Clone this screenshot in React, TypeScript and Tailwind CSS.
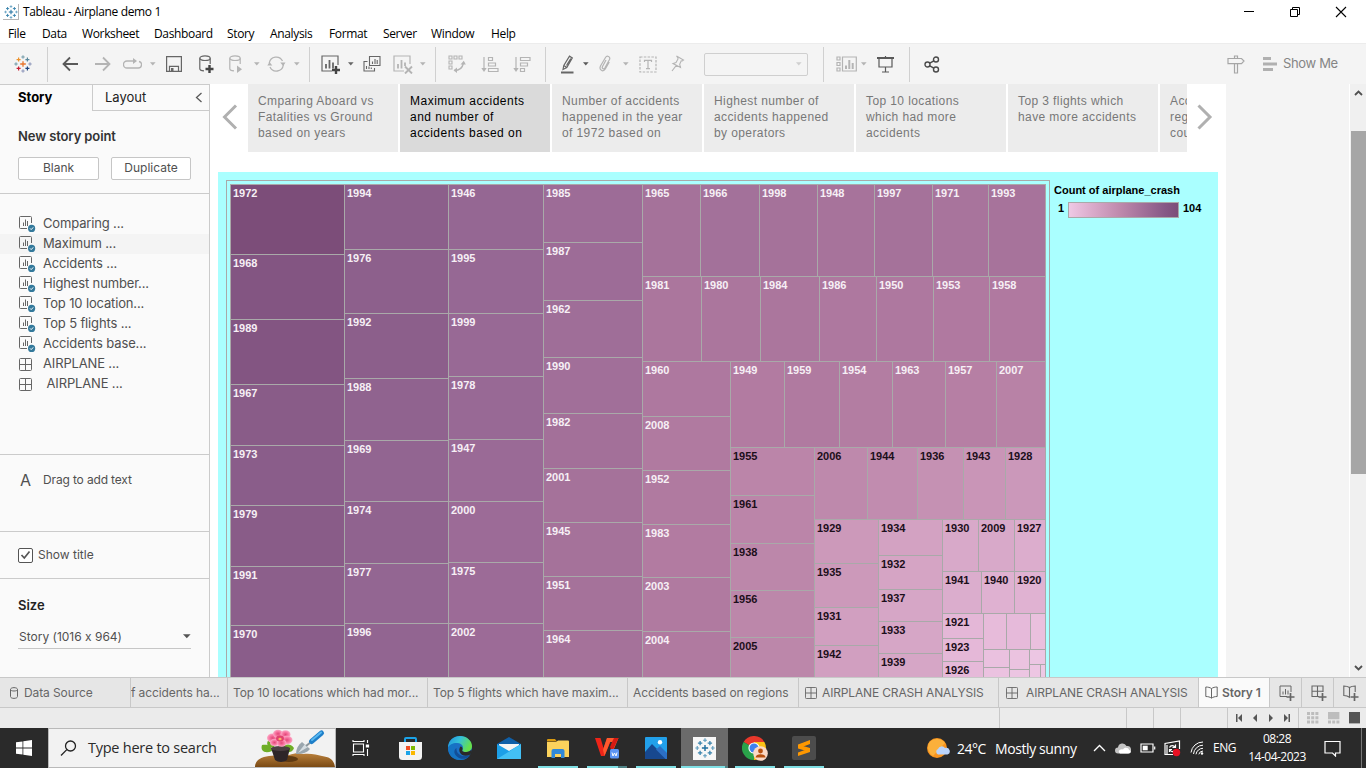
import React from "react";

/* ---------- treemap ---------- */

type Tree = { d: "x" | "y"; e: number[]; k: (string | Tree)[] };

const PALETTE = [
  "#eec9e5", "#eac1df", "#e6b9d9", "#e0b2d2", "#daabcb", "#d5a4c4", "#cf9dbe", "#ca96b8", "#c48fb2", "#be89ac",
  "#b882a6", "#b27ba1", "#aa759d", "#a27099", "#9a6a96", "#926591", "#8c5f8b", "#865986", "#81537f", "#7c4d79",
];

const channel = (hex: string, i: number) => parseInt(hex.slice(1 + i * 2, 3 + i * 2), 16);

function colorFor(value: number) {
  const t = Math.max(0, Math.min(19, ((value - 1) / 103) * 19));
  const lo = Math.floor(t);
  const hi = Math.min(19, lo + 1);
  const mix = [0, 1, 2].map((i) =>
    Math.round(channel(PALETTE[lo], i) * (1 - (t - lo)) + channel(PALETTE[hi], i) * (t - lo))
  );
  return `rgb(${mix.join(",")})`;
}

const x = (e: number[], k: (string | Tree)[]): Tree => ({ d: "x", e, k });
const y = (e: number[], k: (string | Tree)[]): Tree => ({ d: "y", e, k });

const TREE: Tree = x(
  [344, 448, 543, 642, 1045],
  [
    y([254, 319, 384, 445, 505, 566, 625, 685], ["1972", "1968", "1989", "1967", "1973", "1979", "1991", "1970"]),
    y([249, 313, 378, 440, 501, 563, 623, 684], ["1994", "1976", "1992", "1988", "1969", "1974", "1977", "1996"]),
    y([249, 313, 376, 439, 501, 562, 623, 684], ["1946", "1995", "1999", "1978", "1947", "2000", "1975", "2002"]),
    y([242, 300, 357, 413, 468, 522, 576, 630, 684], ["1985", "1987", "1962", "1990", "1982", "2001", "1945", "1951", "1964"]),
    y(
      [276, 361, 685],
      [
        x([700, 759, 817, 874, 932, 988, 1045], ["1965", "1966", "1998", "1948", "1997", "1971", "1993"]),
        x([701, 760, 819, 876, 933, 989, 1045], ["1981", "1980", "1984", "1986", "1950", "1953", "1958"]),
        x(
          [730, 1045],
          [
            y([416, 470, 524, 577, 631, 685], ["1960", "2008", "1952", "1983", "2003", "2004"]),
            y(
              [447, 685],
              [
                x([784, 839, 892, 945, 996, 1045], ["1949", "1959", "1954", "1963", "1957", "2007"]),
                x(
                  [814, 1045],
                  [
                    y([495, 543, 590, 637, 684], ["1955", "1961", "1938", "1956", "2005"]),
                    y(
                      [519, 685],
                      [
                        x([867, 917, 963, 1005, 1045], ["2006", "1944", "1936", "1943", "1928"]),
                        x(
                          [878, 942, 1045],
                          [
                            y([563, 607, 645, 683], ["1929", "1935", "1931", "1942"]),
                            y([555, 589, 621, 653, 685], ["1934", "1932", "1937", "1933", "1939"]),
                            y(
                              [571, 613, 685],
                              [
                                x([978, 1014, 1045], ["1930", "2009", "1927"]),
                                x([981, 1014, 1045], ["1941", "1940", "1920"]),
                                x(
                                  [983, 1045],
                                  [
                                    y([638, 661, 683], ["1921", "1923", "1926"]),
                                    y(
                                      [649, 685],
                                      [
                                        x([1006, 1030, 1045], ["", "", ""]),
                                        x(
                                          [1009, 1029, 1045],
                                          [
                                            y([667, 683], ["", ""]),
                                            y([669, 683], ["", ""]),
                                            y([664, 683], ["", x([1040, 1045], ["", ""])]),
                                          ]
                                        ),
                                      ]
                                    ),
                                  ]
                                ),
                              ]
                            ),
                          ]
                        ),
                      ]
                    ),
                  ]
                ),
              ]
            ),
          ]
        ),
      ]
    ),
  ]
);

function Tile({ node, x0, y0, x1, y1 }: { node: string | Tree; x0: number; y0: number; x1: number; y1: number }) {
  if (typeof node === "string") {
    const value = ((x1 - x0) * (y1 - y0)) / 76.7;
    return (
      <div
        className={
          "shrink-0 overflow-hidden border-r border-b border-[#a9a9a9] pl-[2px] pt-[2px] text-[11px] font-bold leading-[13px] " +
          (value < 54 ? "text-[#1c0f1a]" : "text-[#f6eff5]")
        }
        style={{ width: x1 - x0, height: y1 - y0, backgroundColor: colorFor(value) }}
      >
        {node}
      </div>
    );
  }
  return (
    <div
      className={"flex shrink-0 " + (node.d === "x" ? "flex-row" : "flex-col")}
      style={{ width: x1 - x0, height: y1 - y0 }}
    >
      {node.k.map((child, i) => {
        const a = i ? node.e[i - 1] : node.d === "x" ? x0 : y0;
        const b = node.e[i];
        return node.d === "x" ? (
          <Tile key={i} node={child} x0={a} x1={b} y0={y0} y1={y1} />
        ) : (
          <Tile key={i} node={child} x0={x0} x1={x1} y0={a} y1={b} />
        );
      })}
    </div>
  );
}

/* ---------- icons ---------- */

type IconProps = { w: number; h: number; className?: string; children: React.ReactNode; sw?: number };
const Ic = ({ w, h, className = "", children, sw = 1.2 }: IconProps) => (
  <svg
    width={w}
    height={h}
    viewBox={`0 0 ${w} ${h}`}
    className={"shrink-0 " + className}
    fill="none"
    stroke="currentColor"
    strokeWidth={sw}
  >
    {children}
  </svg>
);

const plus = (cx: number, cy: number, r: number) => `M${cx - r} ${cy}h${2 * r}M${cx} ${cy - r}v${2 * r}`;

const TableauMark = ({ size, colors, className = "" }: { size: number; colors: string[]; className?: string }) => (
  <svg width={size} height={size} viewBox="0 0 18 18" className={"shrink-0 " + className} fill="none">
    <path d={plus(9, 9, 2.8)} stroke={colors[0]} strokeWidth="1.3" />
    <path d={plus(4.6, 4.6, 2)} stroke={colors[1]} strokeWidth="1.2" />
    <path d={plus(13.4, 4.6, 2)} stroke={colors[2]} strokeWidth="1.2" />
    <path d={plus(4.6, 13.4, 2)} stroke={colors[3]} strokeWidth="1.2" />
    <path d={plus(13.4, 13.4, 2)} stroke={colors[4]} strokeWidth="1.2" />
    <path d={plus(9, 2, 1.7)} stroke={colors[5]} strokeWidth="1" />
    <path d={plus(9, 16, 1.7)} stroke={colors[6]} strokeWidth="1" />
    <path d={plus(2, 9, 1.7)} stroke={colors[5]} strokeWidth="1" />
    <path d={plus(16, 9, 1.7)} stroke={colors[6]} strokeWidth="1" />
  </svg>
);

const BLUE = ["#1f6f9f", "#3a84ad", "#3a84ad", "#3a84ad", "#3a84ad", "#5c9bbd", "#5c9bbd"];
const MULTI = ["#e8762d", "#eb912c", "#59879b", "#c72035", "#1f447e", "#7199a6", "#8a93b8"];

const Caret = ({ className = "" }: { className?: string }) => (
  <svg width="6" height="4" viewBox="0 0 6 4" className={"shrink-0 " + className} fill="currentColor">
    <path d="M0 .3h5.6L2.8 3.6z" />
  </svg>
);

const Sep = ({ className = "" }: { className?: string }) => (
  <div className={"h-[35px] w-px shrink-0 bg-[#d0d0d0] " + className} />
);

const SheetIcon = () => (
  <svg width="17" height="17" viewBox="0 0 17 17" fill="none" className="shrink-0">
    <path d="M8 12.5H1.5a1 1 0 0 1-1-1V1.500a1 1 0 0 1 1-1h10a1 1 0 0 1 1 1V7" stroke="#666" />
    <path d="M4.500 10V6.500M6.500 10V3.500M8.500 10V5" stroke="#666" />
    <circle cx="12.6" cy="12.4" r="3.6" fill="#33799b" />
    <path d="M11 12.400l1.200 1.200 2-2.200" stroke="#fff" />
  </svg>
);

const DashIcon = ({ s = 13 }: { s?: number }) => (
  <svg width={s} height={s} viewBox="0 0 13 13" fill="none" stroke="#666" className="shrink-0">
    <rect x=".5" y=".5" width="12" height="12" rx="1" />
    <path d="M6.500 .5v12M.5 6.500h12" />
  </svg>
);

const BookIcon = () => (
  <svg width="13" height="13" viewBox="0 0 13 13" fill="none" stroke="#666" className="shrink-0">
    <path d="M6.500 2.500C5 1.500 3 1 .8 1v9.500c2.200 0 4.200.5 5.700 1.700C8 11 10 10.500 12.200 10.500V1C10 1 8 1.500 6.500 2.500zV12" />
  </svg>
);

/* ---------- sections ---------- */

const TitleBar = () => (
  <div className="flex h-6 items-center bg-white">
    <div className="ml-[3px] flex h-4 w-4 items-center justify-center border-r border-b border-[#b5b5b5]">
      <TableauMark size={14} colors={BLUE} />
    </div>
    <div className="ml-[4px] whitespace-nowrap text-[12px] tracking-[-0.350px] text-black">Tableau - Airplane demo 1</div>
    <div className="flex-1" />
    <Ic w={12} h={12} className="mr-[34px] text-black" sw={1}>
      <path d="M1 5.500h10" />
    </Ic>
    <Ic w={12} h={12} className="mr-[34px] text-black" sw={1}>
      <path d="M1.500 3.500h7v7h-7zM3.500 3.500v-2h7v7h-2" />
    </Ic>
    <Ic w={12} h={12} className="mr-[19px] text-black" sw={1.1}>
      <path d="M1 1l10 10M11 1L1 11" />
    </Ic>
  </div>
);

const MenuBar = () => (
  <div className="flex h-[19px] items-center bg-white text-[12px] leading-[19px] tracking-[-0.350px] text-black">
    <span className="ml-2 w-[34px]">File</span>
    <span className="w-[40px]">Data</span>
    <span className="w-[72px]">Worksheet</span>
    <span className="w-[73px]">Dashboard</span>
    <span className="w-[43px]">Story</span>
    <span className="w-[59px]">Analysis</span>
    <span className="w-[54px]">Format</span>
    <span className="w-[48px]">Server</span>
    <span className="w-[60px]">Window</span>
    <span>Help</span>
  </div>
);

const Toolbar = () => (
  <div className="flex h-[41px] items-center border-t border-[#ececec] bg-[#f4f4f4] text-[#b4b4b4]">
    <TableauMark size={18} colors={MULTI} className="ml-[14px]" />
    <Sep className="ml-[15px]" />
    <Ic w={17} h={16} className="ml-[14px] text-[#595959]" sw={1.8}>
      <path d="M16 8H2M8 1.500L1.500 8 8 14.500" />
    </Ic>
    <Ic w={17} h={16} className="ml-[15px]" sw={1.8}>
      <path d="M1 8h14M9 1.500L15.500 8 9 14.500" />
    </Ic>
    <Ic w={19} h={12} className="ml-[12px]" sw={1.3}>
      <path d="M11 3H4a3.500 3.500 0 0 0 0 7h11a3.300 3.300 0 0 0 1-6.500" />
      <path d="M10 0l4 3-4 3z" fill="currentColor" stroke="none" />
    </Ic>
    <Caret className="ml-[8px]" />
    <Ic w={16} h={16} className="ml-[10px] text-[#666]" sw={1.2}>
      <path d="M.6.6h14.800v14.800H.6zM3.500 15.400v-5h9v5" />
      <path d="M5 12h2.500v3.500H5z" fill="currentColor" stroke="none" />
    </Ic>
    <Ic w={16} h={19} className="ml-[17px] text-[#666]" sw={1.2}>
      <ellipse cx="6" cy="3.200" rx="5.200" ry="2.300" />
      <path d="M.8 3.200v10.500c0 1.200 2 2 4.200 2.100M11.200 3.200V9" />
      <path d="M6.500 14h8M10.500 10v8" strokeWidth="2.400" stroke="#444" />
    </Ic>
    <Ic w={14} h={19} className="ml-[14px]" sw={1.2}>
      <ellipse cx="6" cy="3.200" rx="5.200" ry="2.300" />
      <path d="M.8 3.200v10.500c0 1.200 2 2 4.200 2.100M11.200 3.200V9" />
      <path d="M8 10.500l5 3.800-5 3.800z" fill="currentColor" stroke="none" />
    </Ic>
    <Caret className="ml-[11px]" />
    <Ic w={19} h={16} className="ml-[7px]" sw={1.300}>
      <path d="M2.300 7A7 7 0 0 1 15.500 5M16.300 9A7 7 0 0 1 3 11" />
      <path d="M13.200 6.500h5.300l-2.300 3.500zM.3 9.500h5L2.500 6z" fill="currentColor" stroke="none" />
    </Ic>
    <Caret className="ml-[8px]" />
    <Sep className="ml-[9px]" />
    <Ic w={20} h={19} className="ml-[11px] text-[#666]" sw={1.2}>
      <path d="M11 16H1V1h16v9" />
      <path d="M5 13.500V9M8.500 13.500V5M12 13.500V7.500" strokeWidth="1.800" />
      <path d="M11 15h8M15 11v8" strokeWidth="2.400" stroke="#444" />
    </Ic>
    <Caret className="ml-[7px] text-[#666]" />
    <Ic w={18} h={18} className="ml-[9px] text-[#666]" sw={1.1}>
      <path d="M6.500 1.500h10.500v9H6.500zM4.500 6.500h-3.500v9.500h10.500v-3" />
      <path d="M9.500 9V6.500M12 9V4M14.200 9V5M3.500 14v-3M6 14v-2.500M8.300 14v-1.500" />
    </Ic>
    <Ic w={20} h={19} className="ml-[12px]" sw={1.2}>
      <path d="M11 16H1V1h16v8" />
      <path d="M5 13.500V9M8.500 13.500V5M12 11V7.500" strokeWidth="1.800" />
      <path d="M12 11.500l7 7M19 11.500l-7 7" strokeWidth="1.900" />
    </Ic>
    <Caret className="ml-[7px]" />
    <Sep className="ml-[9px]" />
    <Ic w={18} h={18} className="ml-[12px]" sw={1.100}>
      <path d="M1 1h3v3H1zM6 1h3v3H6zM11 1h3v3h-3zM1 6h3v3H1zM1 11h3v3H1z" />
      <path d="M6.500 15.500c5 0 8-3 8.800-7" strokeWidth="1.400" />
      <path d="M9 12.500v5.500l-3.500-2.800zM12.500 9.500h5.300l-2-3.800z" fill="currentColor" stroke="none" />
    </Ic>
    <Ic w={18} h={17} className="ml-[15px]" sw={1.2}>
      <path d="M3 1v12M7.500 1.500h4v3h-4zM7.500 7h7v3h-7zM7.500 12.500h9.500v3H7.500z" />
      <path d="M.3 12h5.400L3 16z" fill="currentColor" stroke="none" />
    </Ic>
    <Ic w={18} h={17} className="ml-[14px]" sw={1.2}>
      <path d="M3 1v12M7.500 1.500h9.500v3H7.500zM7.500 7h7v3h-7zM7.500 12.500h4v3h-4z" />
      <path d="M.3 12h5.400L3 16z" fill="currentColor" stroke="none" />
    </Ic>
    <Sep className="ml-[14px]" />
    <Ic w={13} h={19} className="ml-[15px] text-[#666]" sw={1.200}>
      <path d="M2 14.500l.8-4L8.500 1.200l2.800 1.800L5.800 12.500zM2.800 10.500l3 2M5.500 10.500L9.800 3.500" />
      <path d="M0 17.500h12.500" strokeWidth="2" />
    </Ic>
    <Caret className="ml-[9px] text-[#595959]" />
    <Ic w={14} h={18} className="ml-[10px]" sw={1.200}>
      <path d="M7 5l-3.500 6.500c-1 2 1.300 3.200 2.300 1.500l4.700-8.500c1.200-2.700-2.500-4.500-4-2L1.500 11c-1.800 4 2.500 6.500 4.800 3l4-7" />
    </Ic>
    <Caret className="ml-[10px]" />
    <Ic w={18} h={17} className="ml-[10px]" sw={1.200}>
      <path d="M1 1h16v15H1z" strokeDasharray="2.500 1.300" />
      <path d="M5.500 6V4.300h7V6M9 4.300v8.400M7 12.700h4" />
    </Ic>
    <Ic w={14} h={18} className="ml-[14px]" sw={1.100}>
      <path d="M5.500 1l7 4-1.300 1-1-.2-1.500 3.500.8 3.200L2 8.500l3-1L7 4l-.2-1.200zM5.300 10.300L1 16" />
    </Ic>
    <div className="ml-[19px] flex h-[23px] w-[104px] shrink-0 items-center justify-end rounded-[2px] border border-[#cfcfcf] pr-[5px]">
      <Caret className="text-[#cfcfcf]" />
    </div>
    <Sep className="ml-[15px]" />
    <Ic w={21} h={16} className="ml-[12px]" sw={1.200}>
      <path d="M1 1h3v3H1zM1 6.500h3v3H1zM1 12h3v3H1zM6.500 1h13.800v14H6.500z" />
      <path d="M10 13V9.500M13.300 13V4M16.700 13V7" strokeWidth="2" />
    </Ic>
    <Caret className="ml-[4px]" />
    <Ic w={18} h={17} className="ml-[10px] text-[#595959]" sw={1.200}>
      <path d="M0 2h17" strokeWidth="2" />
      <path d="M2 3v8h13V3M8.500 0v1.500M8.500 11v5M5 16h7" />
    </Ic>
    <Sep className="ml-[14px]" />
    <Ic w={16} h={17} className="ml-[14px] text-[#4a4a4a]" sw={1.400}>
      <circle cx="3.500" cy="8.500" r="2.500" />
      <circle cx="12" cy="3.500" r="2.500" />
      <circle cx="12" cy="13.500" r="2.500" />
      <path d="M5.800 7.200l4-2.400M5.800 9.800l4 2.400" />
    </Ic>
    <div className="flex-1" />
    <Ic w={19} h={19} className="text-[#a6a6a6]" sw={1.200}>
      <path d="M2 3.500h13.500l2.500 2.500-2.500 2.700H2zM8.500 3.500V1h3v2.500M8.500 8.700V18h3V8.700" />
    </Ic>
    <Ic w={15} h={16} className="ml-[18px] text-[#b0b0b0]" sw={3}>
      <path d="M0 2.500h8M0 8h14M0 13.500h10" />
    </Ic>
    <div className="ml-[5px] w-[83px] shrink-0 whitespace-nowrap font-[Inter] text-[13px] tracking-[-0.350px] text-[#858585]">Show Me</div>
  </div>
);

const SHEETS = ["Comparing ...", "Maximum ...", "Accidents ...", "Highest number...", "Top 10 location...", "Top 5 flights ...", "Accidents base..."];

const Sidebar = () => (
  <div className="flex w-[210px] shrink-0 flex-col border-r border-[#cbcbcb] bg-[#fafafa] font-[Inter] text-[12px] text-[#505050] [font-feature-settings:'calt'_0]">
    <div className="flex h-[27px] shrink-0">
      <div className="w-[92px] border-t border-[#cbcbcb] pl-[18px] text-[13px] font-bold leading-[25px] text-black">Story</div>
      <div className="flex flex-1 items-center justify-between border-t border-b border-l border-[#cbcbcb] pl-3 pr-[6px] text-[13px] text-[#222]">
        <span>Layout</span>
        <Ic w={8} h={11} className="text-[#595959]" sw={1.300}>
          <path d="M6.500 1L1.500 5.500l5 4.500" />
        </Ic>
      </div>
    </div>
    <div className="h-[83px] shrink-0 border-b border-[#cbcbcb] px-[18px] pt-[15px]">
      <div className="text-[13px] font-semibold leading-5 tracking-[-0.100px] text-[#333]">New story point</div>
      <div className="mt-[11px] flex gap-3 text-center leading-[20px]">
        <div className="h-[23px] w-[81px] rounded-[2px] border border-[#c6c6c6] bg-white">Blank</div>
        <div className="h-[23px] w-[80px] rounded-[2px] border border-[#c6c6c6] bg-white">Duplicate</div>
      </div>
    </div>
    <div className="h-[261px] shrink-0 border-b border-[#cbcbcb] pt-[20px] text-[13px] tracking-[-0.150px]">
      {SHEETS.map((s, i) => (
        <div key={s} className={"flex h-5 items-center pl-[19px] " + (i === 1 ? "bg-[#f4f4f4]" : "")}>
          <SheetIcon />
          <span className="ml-[7px]">{s}</span>
        </div>
      ))}
      {["AIRPLANE ...", "\u00a0AIRPLANE ..."].map((s) => (
        <div key={s} className="flex h-5 items-center pl-[19px]">
          <DashIcon />
          <span className="ml-[11px]">{s}</span>
        </div>
      ))}
    </div>
    <div className="flex h-[77px] shrink-0 items-start border-b border-[#cbcbcb] pl-[20px] pt-[15px] leading-5">
      <span className="text-[16px]">A</span>
      <span className="ml-[12px] tracking-[-0.150px]">Drag to add text</span>
    </div>
    <div className="flex h-[47px] shrink-0 items-center border-b border-[#cbcbcb] pl-[18px]">
      <div className="flex h-[15px] w-[15px] items-center justify-center rounded-[2px] border border-[#555] bg-white">
        <Ic w={11} h={10} className="text-[#555]" sw={1.700}>
          <path d="M1.500 5l2.800 3L9.500 1.500" />
        </Ic>
      </div>
      <span className="ml-[5px]">Show title</span>
    </div>
    <div className="px-[18px] pt-[16px]">
      <div className="text-[13px] font-semibold leading-5 text-[#222]">Size</div>
      <div className="mt-[9px] flex h-[25px] items-center justify-between border-b border-[#c6c6c6] pl-px pt-px">
        <span>Story (1016 x 964)</span>
        <svg width="8" height="5" viewBox="0 0 8 5" fill="#555">
          <path d="M0 .3h7.600L3.800 4.300z" />
        </svg>
      </div>
    </div>
  </div>
);

const POINTS = [
  ["Cmparing Aboard vs", "Fatalities vs Ground", "based on years"],
  ["Maximum accidents", "and number of", "accidents based on"],
  ["Number of accidents", "happened in the year", "of 1972 based on"],
  ["Highest number of", "accidents happened", "by operators"],
  ["Top 10 locations", "which had more", "accidents"],
  ["Top 3 flights which", "have more accidents"],
  ["Acc", "reg", "cou"],
];

const Canvas = () => (
  <div className="w-[1016px] shrink-0 overflow-hidden bg-white font-['Liberation_Sans']">
    <div className="flex h-[68px] items-center">
      <Ic w={16} h={26} className="ml-[12px] mr-[10px] mt-[-3px] text-[#b0b0b0]" sw={3}>
        <path d="M14 1.500L2.500 13 14 24.500" />
      </Ic>
      <div className="flex h-full w-[939px] shrink-0 gap-[2px] overflow-hidden">
        {POINTS.map((p, i) => (
          <div
            key={i}
            className={
              "w-[150px] shrink-0 overflow-hidden whitespace-nowrap pl-[10px] pt-[9px] text-[12px] leading-4 " +
              (i === 1 ? "bg-[#dadada] tracking-[0.500px] text-black" : "bg-[#ececec] tracking-[0.400px] text-[#787878]")
            }
          >
            {p.map((l) => (
              <div key={l}>{l}</div>
            ))}
          </div>
        ))}
      </div>
      <Ic w={16} h={26} className="ml-[10px] mt-[-3px] text-[#b0b0b0]" sw={3}>
        <path d="M1.500 1.500L13 13 1.500 24.500" />
      </Ic>
    </div>
    <div className="mx-2 mt-5 flex h-[505px] overflow-hidden bg-[#aaffff] pl-2 pt-2">
      <div className="h-[520px] w-[824px] shrink-0 border border-[#a9a9a9] pl-[3px] pt-[3px]">
        <div className="w-[816px] border-t border-l border-[#a9a9a9]">
          <Tile node={TREE} x0={230} y0={184} x1={1045} y1={685} />
        </div>
      </div>
      <div className="pl-1 text-[11px] font-bold text-black">
        <div className="mt-[3px] whitespace-nowrap leading-[14px]">Count of airplane_crash</div>
        <div className="mt-[5px] flex items-start leading-[13px]">
          <span className="ml-1 w-[10px]">1</span>
          <div className="h-4 w-[111px] border border-[#a9a9a9] bg-[linear-gradient(to_right,#eec9e5,#daabcb_21%,#be89ac_47%,#a27099_68%,#865986_88%,#7c4d79)]" />
          <span className="ml-1">104</span>
        </div>
      </div>
    </div>
  </div>
);

const SheetTabs = () => (
  <div className="flex h-[31px] shrink-0 border-t border-b border-[#c8c8c8] bg-[#e6e6e6] font-[Inter] text-[12px] leading-[29px] tracking-[-0.100px] text-[#666] [&>div]:flex [&>div]:shrink-0 [&>div]:items-center [&>div]:overflow-hidden [&>div]:whitespace-nowrap [&>div]:border-r [&>div]:border-[#c8c8c8]">
    <div className="w-[131px] pl-[10px]">
      <Ic w={8} h={12} className="mr-[6px] text-[#666]" sw={1}>
        <path d="M.5 2.500c0-2.500 7-2.500 7 0v7c0 2.500-7 2.500-7 0zM.5 2.500c0 2 7 2 7 0" />
      </Ic>
      Data Source
    </div>
    <div className="w-[97px]">f accidents ha...</div>
    <div className="w-[200px] pl-[5px]">Top 10 locations which had mor...</div>
    <div className="w-[200px] pl-[5px]">Top 5 flights which have maxim...</div>
    <div className="w-[171px] pl-[5px]">Accidents based on regions</div>
    <div className="w-[200px] gap-[5px] pl-[6px] tracking-[-0.150px]"><DashIcon s={12} />AIRPLANE CRASH ANALYSIS</div>
    <div className="w-[200px] gap-[8px] pl-[7px] tracking-[-0.150px]"><DashIcon s={12} />AIRPLANE CRASH ANALYSIS</div>
    <div className="w-[71px] gap-[4px] bg-[#fafafa] pl-[6px] font-semibold"><BookIcon />Story 1</div>
    <div className="w-[32px] pl-[9px]">
      <Ic w={16} h={16} sw={1}>
        <path d="M8 11.500H1V1h11v6M4 9.500V6.500M6.500 9.500V4M9 9.500V5.500" />
        <path d="M7.500 12h8M11.500 8v8" strokeWidth="1.700" />
      </Ic>
    </div>
    <div className="w-[32px] pl-[9px]">
      <Ic w={16} h={16} sw={1.100}>
        <path d="M8 11.500H1V1h11v6M1 6.300h11M6.500 1v10.500" />
        <path d="M7.500 12h8M11.500 8v8" strokeWidth="1.700" />
      </Ic>
    </div>
    <div className="w-[33px] pl-[9px]">
      <Ic w={16} h={16} sw={1.100}>
        <path d="M6.500 2.500C5 1.500 3 1 .8 1v9.500c2.200 0 4.200.5 5.700 1.700V2.500C8 1.500 10 1 12.200 1v6" />
        <path d="M7.500 12h8M11.500 8v8" strokeWidth="1.700" />
      </Ic>
    </div>
  </div>
);

const StatusBar = () => (
  <div className="flex h-5 shrink-0 items-center bg-[#ebebeb] text-[#555] [&>div]:h-full [&>div]:shrink-0 [&>div]:border-r [&>div]:border-[#c8c8c8]">
    <div className="w-[1000px]" />
    <div className="w-[127px]" />
    <div className="w-[27px]" />
    <div className="w-[27px]" />
    <div className="w-[47px]" />
    <div className="flex w-[71px] items-center pl-[8px]">
      <svg width="58" height="8" viewBox="0 0 58 8" fill="currentColor">
        <path d="M0 0h1.500v8H0zM6 0v8L2 4zM21 0v8l-4-4zM33 0v8l4-4zM48 0v8l4-4zM52.500 0H54v8h-1.500z" />
      </svg>
    </div>
    <svg width="55" height="12" viewBox="0 0 55 12" className="ml-[8px] shrink-0" fill="#bdbdbd">
      <path d="M0 0h3v3H0zM4.200 0h3v3h-3zM8.400 0h3v3h-3zM0 4.200h3v3H0zM4.200 4.200h3v3h-3zM8.400 4.200h3v3h-3zM0 8.400h3v3H0zM4.200 8.400h3v3h-3zM8.400 8.400h3v3h-3zM21 0h11.400v7.200H21zM21 8.400h3v3h-3zM25.200 8.400h3v3h-3zM29.400 8.400h3v3h-3z" />
      <rect x="42" y="0" width="11" height="11.400" fill="#555" />
    </svg>
  </div>
);

const AppSlot = ({ children, ul = "", active = false, w = "w-[49px]" }: { children: React.ReactNode; ul?: string; active?: boolean; w?: string }) => (
  <div className={"flex h-10 shrink-0 flex-col items-center " + w + (active ? " bg-[#6b6b6b]" : "")}>
    <div className="flex h-[38px] w-full items-center justify-center pt-[2px]">{children}</div>
    <div className={"h-[2px] shrink-0 " + ul} />
  </div>
);

const Flowers = () => (
  <svg width="80" height="38" viewBox="0 0 80 38" className="shrink-0">
    <defs>
      <linearGradient id="soil" x1="0" y1="0" x2="0" y2="1">
        <stop offset="0" stopColor="#b9803c" />
        <stop offset="1" stopColor="#7a4a14" />
      </linearGradient>
      <radialGradient id="petal">
        <stop offset="0" stopColor="#e0487a" />
        <stop offset=".5" stopColor="#f7709d" />
        <stop offset="1" stopColor="#fba9c6" />
      </radialGradient>
    </defs>
    <path d="M0 38c0-6 5-10 14-11 8-1 12 0 20-1 6-2 10-2 14-1 8-1 14 1 19 2 8 1 12 4 13 11z" fill="url(#soil)" />
    <path d="M17 22C10 25 5 22 7 16c6-1 10 1 10 6zM27 22c6 3 11 1 12-3-4-5-9-4-12 0zM14 18c-3-3-2-6 1-8l5 9z" fill="#6fae27" />
    <ellipse cx="34" cy="30" rx="9" ry="3" fill="#5f3a12" />
    <path d="M16 19h19l-3 12c-3 2.500-9 2.500-12 0z" fill="#2e2628" />
    <ellipse cx="25.500" cy="19.500" rx="9.500" ry="2.500" fill="#4b3f42" />
    <ellipse cx="17.500" cy="9" rx="5.500" ry="4.500" fill="url(#petal)" />
    <ellipse cx="23" cy="4.800" rx="5" ry="4" fill="url(#petal)" />
    <ellipse cx="30.500" cy="5.500" rx="5" ry="4.200" fill="url(#petal)" />
    <ellipse cx="32" cy="11" rx="5.500" ry="4.200" fill="url(#petal)" />
    <ellipse cx="19.500" cy="13.500" rx="4.500" ry="3.500" fill="url(#petal)" />
    <ellipse cx="26.500" cy="14" rx="4.800" ry="3.800" fill="url(#petal)" />
    <ellipse cx="25" cy="9.500" rx="4" ry="3" fill="#e0426f" />
    <ellipse cx="25" cy="10" rx="1.600" ry="1.200" fill="#f8b26a" />
    <path d="M41 25c0-5 2-9 6-12l8 7c-3 4-8 5-14 5z" fill="#9aa6ae" />
    <path d="M43 24l7-9 3 3z" fill="#d5dde2" />
    <path d="M51 17l5-4" stroke="#8b959b" strokeWidth="2" />
    <path d="M56.500 12.500L66.500 4" stroke="#1e7fc9" strokeWidth="5" strokeLinecap="round" />
    <path d="M57 11L66 3.500" stroke="#58b7ef" strokeWidth="2" strokeLinecap="round" />
  </svg>
);

const Taskbar = () => (
  <div className="flex h-10 shrink-0 items-center bg-[#2a2a2a] text-white">
    <div className="flex w-12 shrink-0 items-center justify-center">
      <svg width="16" height="16" viewBox="0 0 16 16" fill="#fff">
        <path d="M0 2.300L6.500 1.400v6.200H0zM7.300 1.300L16 0v7.600H7.300zM0 8.400h6.500v6.200L0 13.700zM7.300 8.400H16V16l-8.700-1.300z" />
      </svg>
    </div>
    <div className="flex h-10 w-[288px] shrink-0 items-center overflow-hidden border border-[#b9b9b9] bg-[#f2f2f2] pl-[11px] text-[14.500px] tracking-[-0.250px] text-[#2b2b2b]">
      <Ic w={17} h={17} className="text-[#222]" sw={1.300}>
        <circle cx="10.500" cy="6" r="5" />
        <path d="M6.800 9.600L1 15.500" />
      </Ic>
      <span className="ml-[11px] flex-1 whitespace-nowrap">Type here to search</span>
      <Flowers />
    </div>
    <AppSlot w="w-[49px]">
      <Ic w={18} h={18} className="text-white" sw={1.100}>
        <path d="M1.500 5h10v8h-10zM1 1v1.500h11V1M1 17v-1.500h11V17M15.500 1v3M15.500 10v7" />
        <path d="M13.800 5.500h3.300v3h-3.300z" fill="#fff" stroke="none" />
      </Ic>
    </AppSlot>
    <AppSlot w="w-[51px]">
      <svg width="23" height="23" viewBox="0 0 23 23">
        <path d="M6 5V2a1 1 0 0 1 1-1h9a1 1 0 0 1 1 1v3" fill="none" stroke="#1ba3e8" strokeWidth="2" />
        <path d="M0 5h23v14.500a3.500 3.500 0 0 1-3.500 3.500h-16A3.500 3.500 0 0 1 0 19.500z" fill="#f3f3f3" />
        <path d="M7 9h4v4H7z" fill="#f04e24" />
        <path d="M12 9h4v4h-4z" fill="#7eb900" />
        <path d="M7 14h4v4H7z" fill="#1ba3e8" />
        <path d="M12 14h4v4h-4z" fill="#fbb800" />
      </svg>
    </AppSlot>
    <AppSlot w="w-[48px]">
      <svg width="24" height="24" viewBox="0 0 24 24">
        <defs>
          <linearGradient id="edgeTop" x1="0" y1="0" x2="1" y2=".4">
            <stop offset="0" stopColor="#1f8fe0" />
            <stop offset=".5" stopColor="#35c1d8" />
            <stop offset="1" stopColor="#66e04b" />
          </linearGradient>
        </defs>
        <circle cx="12" cy="12" r="12" fill="#1b70c5" />
        <path d="M0 12C0 4 6 0 12 0c7 0 12 5 12 10 0 4-3 6-6 6-4 0-4-1.500-3.500-2.500C16 11 14 7 9.500 7 5 7 1 9 0 12z" fill="url(#edgeTop)" />
        <path d="M0 12C1 8.500 5 7 8 7.500 5 10 6 18 11 21c3 1.500 7 1 10-.5C19 23 15.500 24 12 24 5 24 0 19 0 12z" fill="#1574c4" />
        <path d="M8.500 12c-.5 6 5 9.500 12.500 7.500.8-.3 1 .2.500.7-3 3-9 3.500-12 .8-4-3-4-7-1-9z" fill="#124f98" />
        <path d="M14.500 13.500c-.5 1-.5 2.500 3.500 2.500 2.500 0 4.500-1 5.500-2.500l.5 3-2.500 2.500c-4 1.500-9 .5-10-3.500-.5-2 0-4 1-5 1.300 0 2.500 1.500 2 3z" fill="#2a2a2a" />
      </svg>
    </AppSlot>
    <AppSlot w="w-[50px]">
      <svg width="24" height="22" viewBox="0 0 24 22">
        <path d="M0 7L12 0l12 7v2H0z" fill="#0f5fa8" />
        <path d="M2 7h20v7H2z" fill="#f4f4f4" />
        <path d="M0 7l12 7 12-7v15H0z" fill="#1c9fe8" />
        <path d="M0 22L24 7v15z" fill="#43c0f5" />
      </svg>
    </AppSlot>
    <AppSlot w="w-[48px]" ul="w-10 bg-[#7fdfe4]">
      <svg width="22" height="19" viewBox="0 0 22 19">
        <path d="M0 1a1 1 0 0 1 1-1h7l2 2.500H0z" fill="#d99a10" />
        <path d="M0 3h9l2-1.500h10a1 1 0 0 1 1 1V18H0z" fill="#fbd25c" />
        <path d="M4.500 19v-7a2 2 0 0 1 2-2h9a2 2 0 0 1 2 2v7H14v-4H8v4z" fill="#2f88d8" />
      </svg>
    </AppSlot>
    <AppSlot w="w-[49px]" ul="w-10 bg-[linear-gradient(to_right,#7fdfe4_78%,#4f8285_78%)]">
      <svg width="24" height="22" viewBox="0 0 24 22">
        <path d="M0 1h5.500l3 10L12 1h5L9.500 19H6z" fill="#ee2418" />
        <path d="M12 1h11.500l-5 12-2.500-4 2-4h-3L9.500 19l-1.500-6z" fill="#ff5a2e" />
        <path d="M19 1h4.500L17 15l-2-5 2-5z" fill="#d61a12" />
        <rect x="15" y="12" width="9" height="9.500" rx="1.500" fill="#5d95f5" />
        <path d="M17 15.500l1 3.500 1.500-3 1.500 3 1-3.500" stroke="#fff" fill="none" />
      </svg>
    </AppSlot>
    <AppSlot w="w-[50px]" ul="w-10 bg-[#7fdfe4]">
      <svg width="22" height="22" viewBox="0 0 22 22">
        <rect width="22" height="22" rx="1" fill="#22a0ea" />
        <path d="M0 15l7-8 15 15H0z" fill="#17488f" />
        <path d="M11 12.500l4-3.500 7 7v6h-1.500z" fill="#2c6fc4" />
        <circle cx="15" cy="5.200" r="2.200" fill="#fff" />
      </svg>
    </AppSlot>
    <AppSlot w="w-[47px]" active ul="w-full bg-[linear-gradient(to_right,#7fdfe4_93%,#4f8285_93%)]">
      <div className="flex h-[23px] w-[23px] items-center justify-center bg-[#f7f7f7]">
        <TableauMark size={20} colors={BLUE} />
      </div>
    </AppSlot>
    <AppSlot w="w-[53px]" ul="w-10 bg-[#7fdfe4]">
      <svg width="26" height="25" viewBox="0 0 26 25">
        <path d="M12 12L1.600 6a12 12 0 0 1 20.800 0z" fill="#e8382b" />
        <path d="M12 12L1.600 6a12 12 0 0 0 10.400 18z" fill="#2aa24a" />
        <path d="M12 12h12a12 12 0 0 0-1.600-6H12z" fill="#fbc116" />
        <path d="M12 24a12 12 0 0 0 12-12H12z" fill="#fbc116" />
        <circle cx="12" cy="12" r="5.600" fill="#fff" />
        <circle cx="12" cy="12" r="4.500" fill="#3f80f0" />
        <circle cx="18.500" cy="17.500" r="7.300" fill="#fbd9c6" />
        <circle cx="18.500" cy="15" r="2.400" fill="#b8500f" />
        <path d="M13.500 21.500c0-4.500 10-4.500 10 0z" fill="#b8500f" />
      </svg>
    </AppSlot>
    <AppSlot w="w-[45px]" ul="w-10 bg-[#7fdfe4]">
      <svg width="24" height="24" viewBox="0 0 24 24">
        <rect width="24" height="24" rx="2" fill="#4c4c4c" />
        <path d="M6 8.500L18 4v4L6 12.500zM6 8.500l12 3.500v4L6 12.500zM6 16.500L18 12v4L6 20z" fill="#ff9800" />
      </svg>
    </AppSlot>
    <div className="flex-1" />
    <svg width="23" height="21" viewBox="0 0 23 21" className="shrink-0">
      <circle cx="10" cy="10" r="10" fill="#f7931e" />
      <path d="M2 5a10 10 0 0 1 16 0L6 18A10 10 0 0 1 2 5z" fill="#fbb03b" />
      <path d="M11 16.500a3 3 0 0 1 0-5.500 4 4 0 0 1 7-1 3.300 3.300 0 0 1 2.500 6.500z" fill="#b9d3fb" />
    </svg>
    <div className="ml-[7px] w-[38px] whitespace-nowrap text-[14px] tracking-[-0.500px]">24°C</div>
    <div className="w-[98px] whitespace-nowrap text-[14px] tracking-[-0.400px]">Mostly sunny</div>
    <Ic w={13} h={8} className="text-white" sw={1.300}>
      <path d="M1 7l5.500-5.500L12 7" />
    </Ic>
    <svg width="16" height="11" viewBox="0 0 16 11" className="ml-[9px] shrink-0">
      <path d="M3 10.500a3 3 0 0 1 0-6A4.500 4.500 0 0 1 11.500 3a3.800 3.800 0 0 1 1.500 7.500z" fill="#c4c4c4" />
      <path d="M5 10.500c-3-2 0-5 3-4 1-2.500 6-2 6 .5 2.500.5 2 3.500 0 3.500z" fill="#fff" />
    </svg>
    <Ic w={16} h={10} className="ml-[9px] text-white" sw={1.200}>
      <path d="M1 1h12v8H1zM14.700 3.500v3" />
      <path d="M2.700 2.700h5v4.600h-5z" fill="#fff" stroke="none" />
    </Ic>
    <Ic w={18} h={17} className="ml-[8px] text-white" sw={1.200}>
      <path d="M9 14.500H1V3.500L15.500 1v8M3 14V5" />
      <path d="M5.500 7.500c1-2.500 4.500-2.500 5.500 0M11.500 4.500v3h-3M5.500 12v-2.500h2.500M6 10c1 2 3.500 2 4.500.5" />
      <circle cx="12.500" cy="12.500" r="3.700" fill="#e81123" stroke="none" />
    </Ic>
    <Ic w={14} h={14} className="ml-[8px] text-white" sw={1}>
      <path d="M1 11.500A12 12 0 0 1 13 1M3.500 13A9.500 9.500 0 0 1 13 4.200M6 13.300A7 7 0 0 1 13 7.300M8.800 13.300A4.500 4.500 0 0 1 13 10" />
      <circle cx="12" cy="12.500" r="1.200" fill="#fff" stroke="none" />
    </Ic>
    <div className="ml-[9px] w-[24px] text-[12px] tracking-[-0.450px]">ENG</div>
    <div className="ml-[7px] w-[66px] whitespace-nowrap text-center text-[12px] leading-[18px] tracking-[-0.500px]">
      08:28
      <br />
      14-04-2023
    </div>
    <Ic w={17} h={17} className="ml-[14px] text-white" sw={1.200}>
      <path d="M1 1.500h15v11.500h-4.500v3L8.500 13H1z" />
    </Ic>
    <div className="ml-[20px] mr-1 h-10 w-px shrink-0 bg-[#777]" />
  </div>
);

export default function App() {
  return (
    <div className="flex h-[768px] w-[1366px] flex-col overflow-hidden bg-[#f4f4f4] font-['Open_Sans','Noto_Sans',sans-serif]">
      <TitleBar />
      <MenuBar />
      <Toolbar />
      <div className="flex h-[593px] shrink-0 overflow-hidden">
        <Sidebar />
        <Canvas />
        <div className="flex-1" />
        <div className="flex w-[17px] shrink-0 flex-col items-center border-l border-white bg-[#f0f0f0]">
          <Ic w={9} h={6} className="mt-[6px] text-[#505050]" sw={1.800}>
            <path d="M1 5l3.500-3.500L8 5" />
          </Ic>
          <div className="mt-[35px] h-[343px] w-[15px] bg-[#a6a6a6]" />
          <div className="flex-1" />
          <Ic w={9} h={6} className="mb-[6px] text-[#505050]" sw={1.800}>
            <path d="M1 1l3.500 3.500L8 1" />
          </Ic>
        </div>
      </div>
      <SheetTabs />
      <StatusBar />
      <Taskbar />
    </div>
  );
}
